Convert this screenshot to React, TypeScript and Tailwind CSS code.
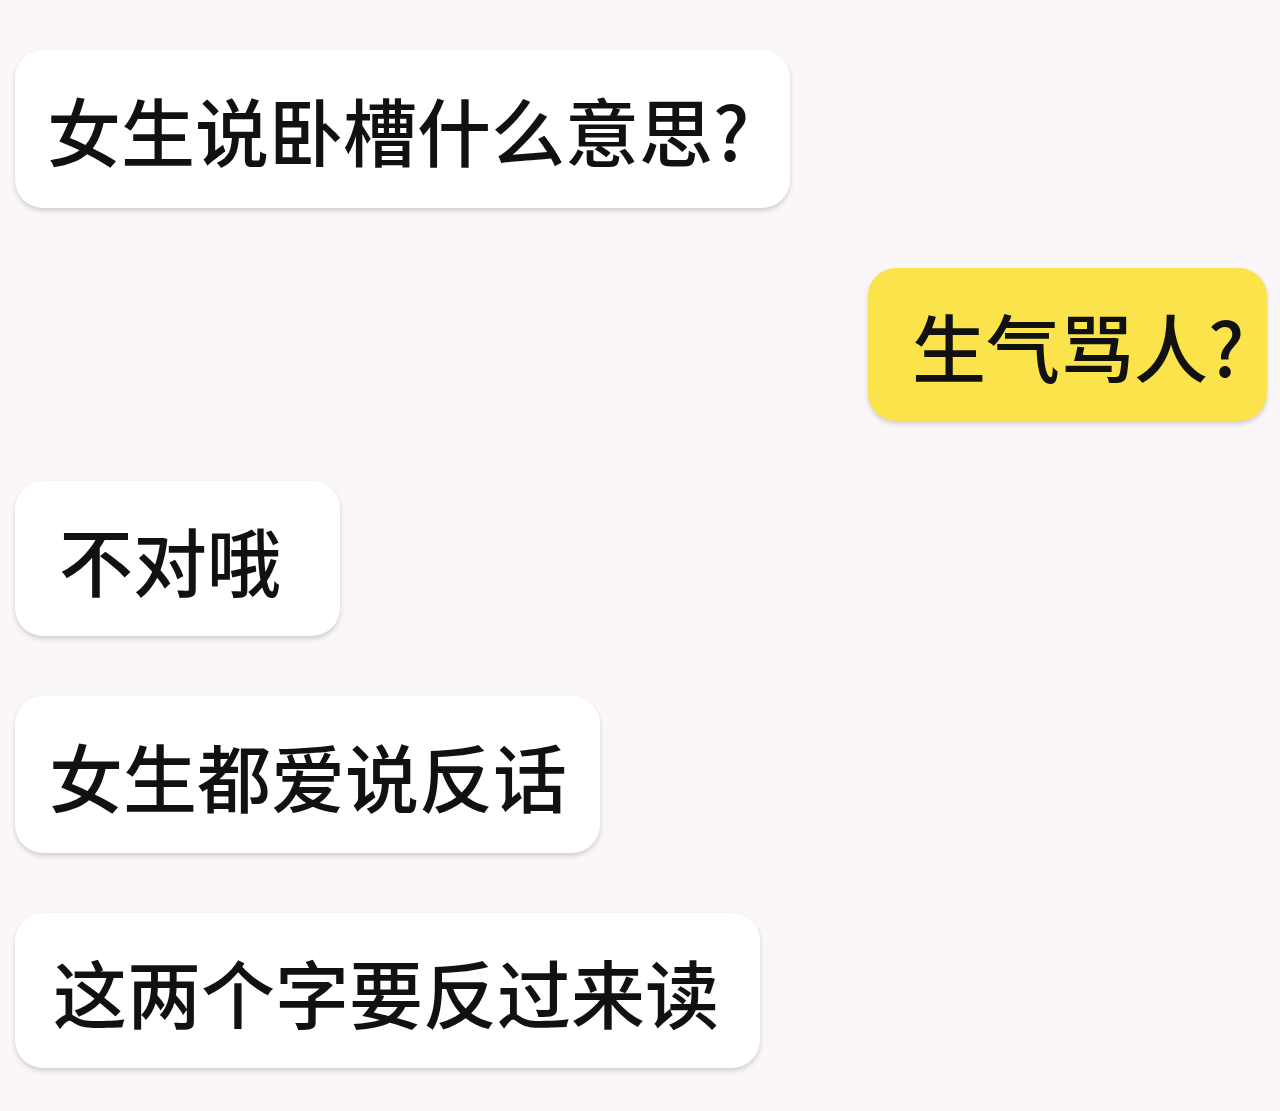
const messages = [
  { text: "女生说卧槽什么意思?", mine: false, box: "w-[775px] h-[158px] pl-[32px]" },
  { text: "生气骂人?", mine: true, box: "w-[399px] h-[153px] pl-[44px]" },
  { text: "不对哦", mine: false, box: "w-[325px] h-[155px] pl-[44px]" },
  { text: "女生都爱说反话", mine: false, box: "w-[585px] h-[157px] pl-[34px]" },
  { text: "这两个字要反过来读", mine: false, box: "w-[745px] h-[155px] pl-[38px]" },
];

export default function App() {
  return (
    <div
      className="flex h-[1111px] w-[1280px] flex-col gap-[60px] overflow-hidden bg-[#faf6fa] pl-[15px] pr-[13px] pt-[50px]"
      style={{ fontFamily: '"Noto Sans CJK SC", "Noto Sans", sans-serif' }}
    >
      {messages.map((m, i) => (
        <div key={i} className={`flex ${m.mine ? "justify-end" : "justify-start"}`}>
          <div
            className={`flex shrink-0 items-center rounded-[28px] shadow-[0_3px_5px_rgba(0,0,0,0.16)] ${m.box} ${
              m.mine ? "bg-[#fbe34b]" : "bg-white"
            }`}
          >
            <span className="whitespace-nowrap text-[74px] font-medium leading-none text-[#111]">{m.text}</span>
          </div>
        </div>
      ))}
    </div>
  );
}
